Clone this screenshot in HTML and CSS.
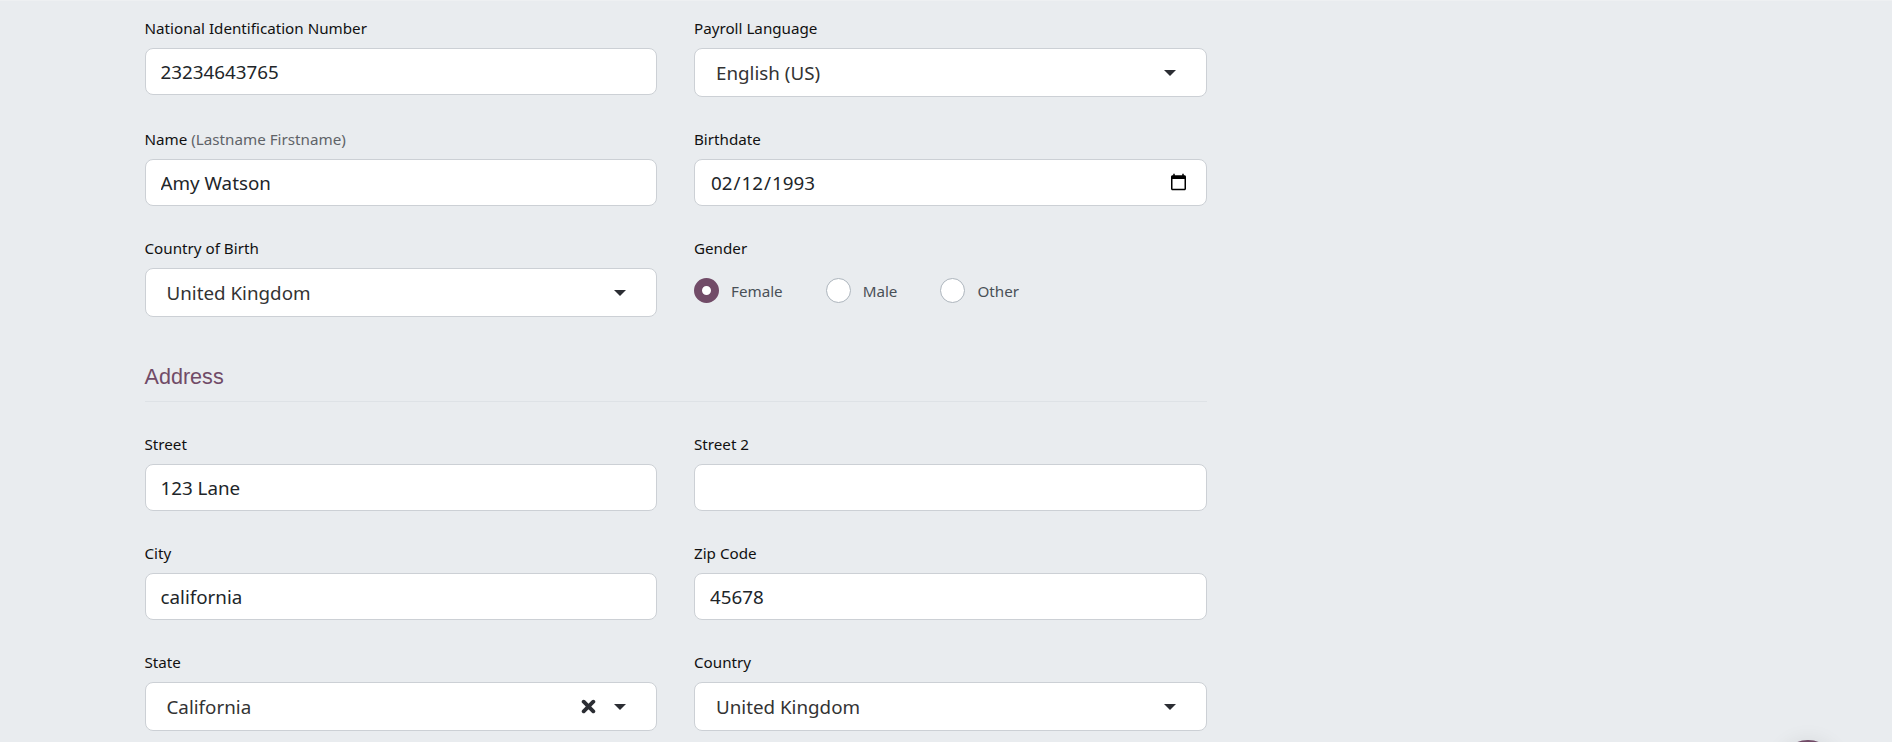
FILE: index.html
```html
<!DOCTYPE html>
<html lang="en">
<head>
   <meta charset="utf-8">
   <title>Employee - Private Information</title>
   <link rel="stylesheet" href="styles.css">
</head>
<body>

<div class="top-line"></div>

<form class="sheet">
   <div class="grid">
      <div class="field">
         <label class="lbl">National Identification Number</label>
         <input class="txt" type="text" value="23234643765">
      </div>
      <div class="field">
         <label class="lbl">Payroll Language</label>
         <div class="sel"><span class="sel-val">English (US)</span><span class="caret"></span></div>
      </div>
      <div class="field">
         <label class="lbl">Name <small class="hint">(Lastname Firstname)</small></label>
         <input class="txt" type="text" value="Amy Watson">
      </div>
      <div class="field">
         <label class="lbl">Birthdate</label>
         <input class="txt date" type="date" value="1993-02-12">
      </div>
      <div class="field">
         <label class="lbl">Country of Birth</label>
         <div class="sel"><span class="sel-val">United Kingdom</span><span class="caret"></span></div>
      </div>
      <div class="field">
         <label class="lbl">Gender</label>
         <div class="radios">
            <label class="radio"><input type="radio" name="gender" checked> Female</label>
            <label class="radio"><input type="radio" name="gender"> Male</label>
            <label class="radio"><input type="radio" name="gender"> Other</label>
         </div>
      </div>
   </div>

   <h2 class="section">Address</h2>

   <div class="grid">
      <div class="field">
         <label class="lbl">Street</label>
         <input class="txt" type="text" value="123 Lane">
      </div>
      <div class="field">
         <label class="lbl">Street 2</label>
         <input class="txt" type="text" value="">
      </div>
      <div class="field">
         <label class="lbl">City</label>
         <input class="txt" type="text" value="california">
      </div>
      <div class="field">
         <label class="lbl">Zip Code</label>
         <input class="txt" type="text" value="45678">
      </div>
      <div class="field">
         <label class="lbl">State</label>
         <div class="sel">
            <span class="sel-val">California</span>
            <svg class="clear" viewBox="0 0 14 14" width="15" height="15"><path d="M2.5 2.5l9 9M11.5 2.5l-9 9" stroke="#2b2d33" stroke-width="3.6" stroke-linecap="round" fill="none"/></svg>
            <span class="caret"></span>
         </div>
      </div>
      <div class="field">
         <label class="lbl">Country</label>
         <div class="sel"><span class="sel-val">United Kingdom</span><span class="caret"></span></div>
      </div>
   </div>
</form>

<div class="fab"></div>

</body>
</html>
```

FILE: styles.css
```css
html, body {
   margin: 0;
   height: 742px;
   overflow: hidden;
}

body {
   background-color: #e9ecef;
   color: #212529;
   font-family: "Noto Sans", "Open Sans", sans-serif;
}

.top-line {
   height: 1px;
   background-color: #eef0f2;
}

.sheet {
   width: 1062px;
   padding: 17px 0 0 144.5px;
}

.grid {
   display: grid;
   grid-template-columns: 512.5px 512.5px;
   column-gap: 37px;
   row-gap: 32px;
}

.field {
   display: flex;
   flex-direction: column;
}

.lbl {
   display: block;
   height: 20px;
   line-height: 20px;
   margin-bottom: 10px;
   font-size: 15.2px;
   color: #111;
}

.hint {
   font-size: 15.2px;
   color: #5f6368;
}

.txt {
   box-sizing: border-box;
   display: block;
   width: 100%;
   height: 47px;
   padding: 0 15px;
   border: solid #ccd0d5 1px;
   border-radius: 8px;
   background-color: #fff;
   color: #212529;
   font-family: inherit;
   font-size: 18.8px;
   outline: none;
}

.date {
   padding-right: 16px;
}

.sel {
   box-sizing: border-box;
   display: flex;
   align-items: center;
   height: 49px;
   padding: 0 30px 0 21px;
   border: solid #ccd0d5 1px;
   border-radius: 8px;
   background-color: #fff;
   color: #333;
   font-size: 18.8px;
}

.sel-val {
   flex: 1;
}

.caret {
   width: 0;
   height: 0;
   border-left: 6.5px solid transparent;
   border-right: 6.5px solid transparent;
   border-top: 6.5px solid #2b2d33;
}

.clear {
   margin-right: 18px;
}

.radios {
   display: flex;
   align-items: center;
   gap: 43px;
   height: 49px;
   margin-top: -2px;
}

.radio {
   display: flex;
   align-items: center;
   gap: 12px;
   font-size: 15.2px;
   color: #495057;
}

.radio input {
   appearance: none;
   box-sizing: border-box;
   width: 25px;
   height: 25px;
   margin: 0;
   border: solid #adb5bd 1px;
   border-radius: 50%;
   background-color: #fff;
}

.radio input:checked {
   border: solid #714b67 8px;
}

.section {
   box-sizing: border-box;
   height: 43px;
   margin: 42px 0 32px;
   padding-top: 5px;
   border-bottom: solid #dee2e6 1px;
   color: #714b67;
   font-family: "Liberation Sans", sans-serif;
   font-size: 21.6px;
   font-weight: normal;
}

.fab {
   position: fixed;
   left: 1778px;
   top: 740px;
   width: 60px;
   height: 60px;
   border-radius: 50%;
   background-color: #714b67;
   box-shadow: 0 0 20px rgba(0, 0, 0, 0.08);
}
```
